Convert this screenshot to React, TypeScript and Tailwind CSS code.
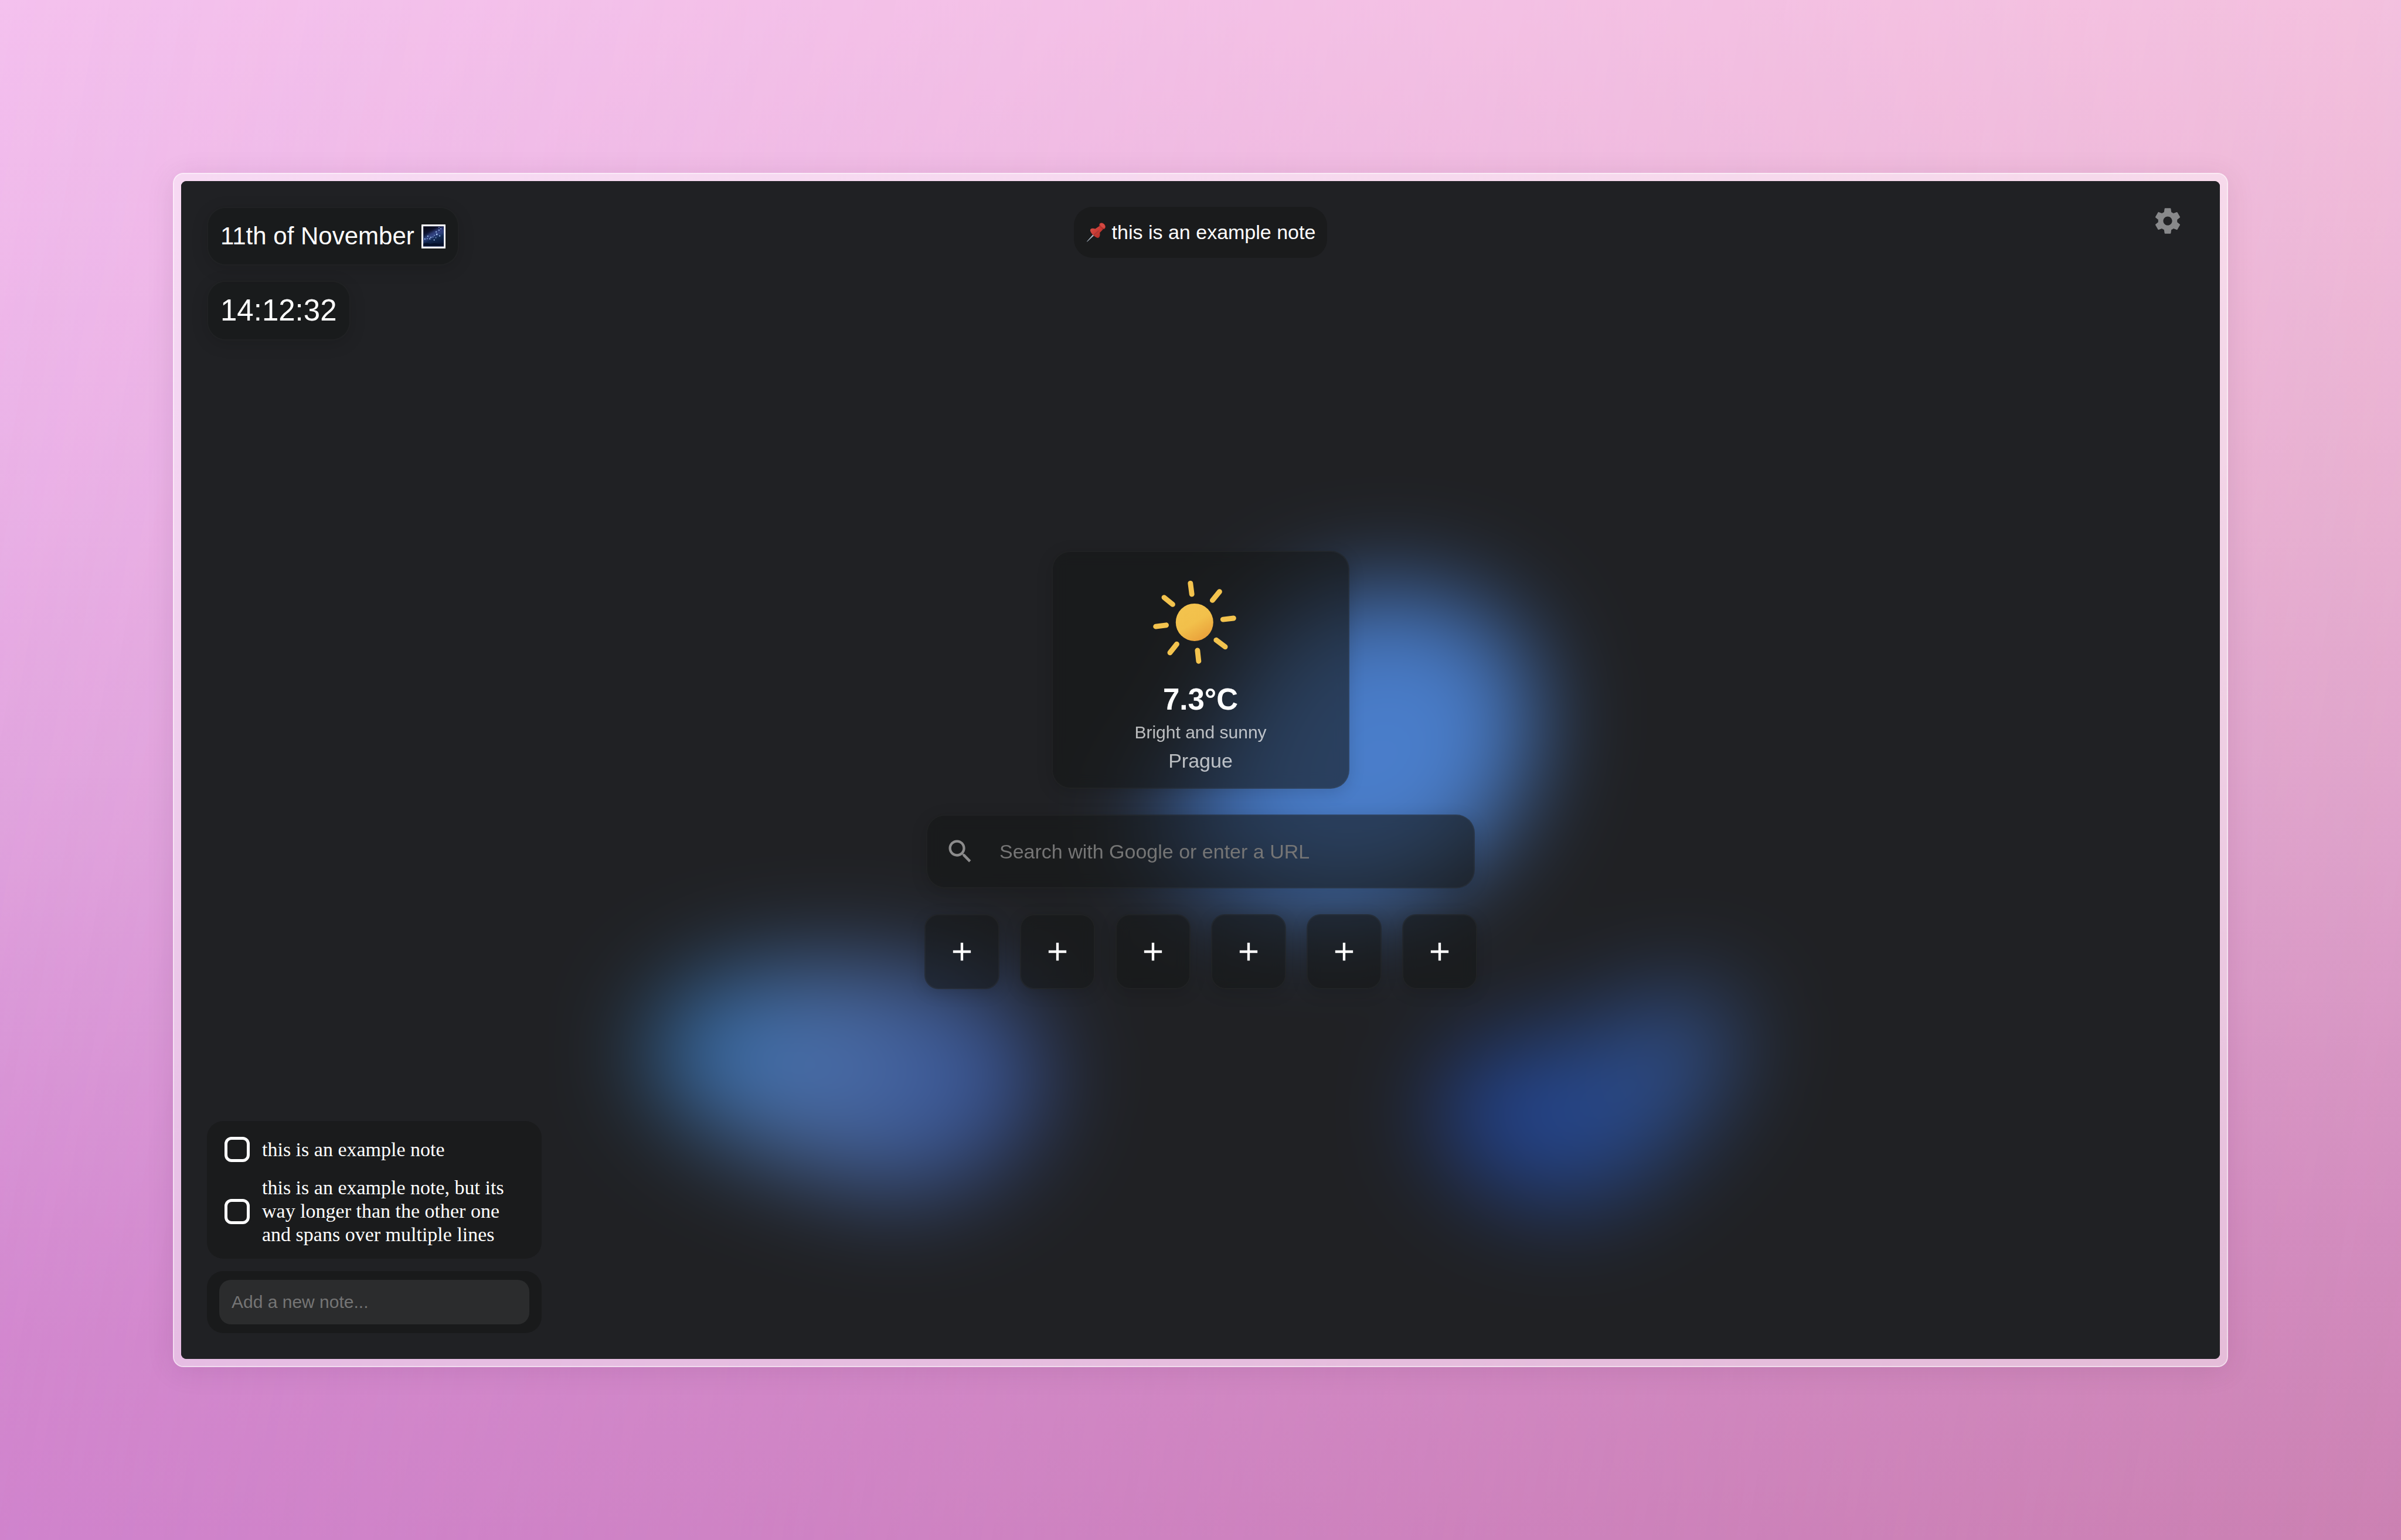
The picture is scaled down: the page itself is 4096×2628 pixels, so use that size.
import { useState } from "react";

const ARIAL = "font-['Liberation_Sans',Arial,sans-serif]";
const GLASS =
  "border-2 border-white/[0.03] bg-[#161717]/60 shadow-[0_6px_28px_rgba(0,0,0,0.14)]";

function MilkyWay() {
  const stars: [number, number, number][] = [
    [155, 56, 3], [167, 64, 3], [155, 73, 4], [137, 84, 4], [141, 100, 5], [160, 110, 4],
    [125, 106, 3], [83, 112, 4], [103, 119, 4], [64, 130, 4], [79, 128, 3], [96, 129, 4],
    [124, 136, 4], [135, 122, 3], [116, 117, 3],
  ];
  return (
    <svg className="size-[41px] shrink-0" viewBox="42 36 155 155" aria-label="Milky way" role="img">
      <defs>
        <linearGradient id="night" x1="0" y1="0" x2="0.3" y2="1">
          <stop offset="0" stopColor="#05060f" />
          <stop offset="0.35" stopColor="#0e1330" />
          <stop offset="0.6" stopColor="#16305a" />
          <stop offset="1" stopColor="#0a1838" />
        </linearGradient>
        <filter id="haze" x="-50%" y="-50%" width="200%" height="200%" colorInterpolationFilters="sRGB">
          <feGaussianBlur stdDeviation="9" />
        </filter>
        <clipPath id="sky">
          <rect x="54" y="48" width="132" height="129" />
        </clipPath>
      </defs>
      <rect x="42" y="36" width="155" height="155" rx="2" fill="#fdfdff" />
      <rect x="52" y="47" width="135" height="134" fill="#8f97b8" />
      <g clipPath="url(#sky)">
        <rect x="54" y="48" width="132" height="129" fill="url(#night)" />
        <path d="M48 134 L92 96 L150 60 L190 44 L190 92 L140 112 L48 150Z" fill="#3f4f98" opacity="0.7" filter="url(#haze)" />
        <path d="M54 160 l22 -5 24 6 26 -5 28 5 32 -4 v24 h-132z" fill="#04102a" />
        {stars.map(([x, y, r]) => (
          <circle key={`${x}-${y}`} cx={x} cy={y} r={r} fill="#a9c8f4" />
        ))}
      </g>
    </svg>
  );
}

function Pushpin() {
  return (
    <svg className="size-[35px] shrink-0" viewBox="30 30 132 130" aria-label="Pinned" role="img">
      <defs>
        <linearGradient id="pinRed" x1="0" y1="0" x2="1" y2="1">
          <stop offset="0" stopColor="#d8544c" />
          <stop offset="0.5" stopColor="#cb3a33" />
          <stop offset="1" stopColor="#a02a25" />
        </linearGradient>
      </defs>
      <path d="M36 156 L84 101 L92 108 L42 154Z" fill="#8d99a6" />
      <path d="M36 156 L86 103 L89 106Z" fill="#c5d0da" />
      <path d="M60 84 C58 72 72 66 92 72 L119 54 L142 76 L121 98 C126 116 118 132 108 131 C94 128 62 104 60 84Z" fill="url(#pinRed)" />
      <path d="M118 44 C121 31 138 30 149 41 C161 52 160 70 148 74 C134 77 115 59 118 44Z" fill="#b8322d" />
      <path d="M122 42 C127 34 139 35 148 43 C156 51 158 61 153 67 C144 69 124 56 122 42Z" fill="#d34a43" />
      <path d="M78 112 L112 82 L117 86 L86 116Z" fill="#8e3a3c" opacity="0.6" />
    </svg>
  );
}

function Sun() {
  return (
    <svg className="h-[161px] w-[177px]" viewBox="4 0 220 200" aria-hidden="true">
      <defs>
        <linearGradient id="sunFill" x1="0.25" y1="0.07" x2="0.75" y2="0.93">
          <stop offset="0" stopColor="#f3c34e" />
          <stop offset="0.5" stopColor="#f2c04b" />
          <stop offset="1" stopColor="#eaa23b" />
        </linearGradient>
      </defs>
      <circle cx="100.7" cy="99.3" r="39.8" fill="url(#sunFill)" />
      <path
        d="M92 16.5L95 39.7M153.7 34.3L138.7 52.7M183.5 90.7L161 93.3M146.7 137L165.7 151.3M107 159L109.5 181.7M63 145.7L48.7 163.7M40.7 105.3L18.5 108.2M36.3 46.7L54.3 61.3"
        stroke="#f3c34e"
        strokeWidth="11"
        strokeLinecap="round"
        fill="none"
      />
    </svg>
  );
}

function Aurora() {
  return (
    <svg
      className="pointer-events-none absolute inset-0 size-full"
      viewBox="118.3 118.3 1331.4 769.1"
      preserveAspectRatio="xMidYMid slice"
      aria-hidden="true"
    >
      <defs>
        <filter
          id="soft"
          filterUnits="userSpaceOnUse"
          x="-20"
          y="-20"
          width="1610"
          height="1050"
          colorInterpolationFilters="sRGB"
        >
          <feGaussianBlur stdDeviation="32" />
        </filter>
        <radialGradient id="top" gradientUnits="userSpaceOnUse" cx="905" cy="500" r="140">
          <stop offset="0" stopColor="#4b80cf" />
          <stop offset="0.6" stopColor="#487ac4" />
          <stop offset="1" stopColor="#345892" />
        </radialGradient>
        <linearGradient id="left" gradientUnits="userSpaceOnUse" x1="430" y1="670" x2="670" y2="740">
          <stop offset="0" stopColor="#2e6ca6" />
          <stop offset="0.4" stopColor="#4b6ea8" />
          <stop offset="1" stopColor="#344c8a" />
        </linearGradient>
        <linearGradient id="right" gradientUnits="userSpaceOnUse" x1="960" y1="740" x2="1130" y2="660">
          <stop offset="0" stopColor="#213f88" />
          <stop offset="0.4" stopColor="#26478a" />
          <stop offset="1" stopColor="#355080" />
        </linearGradient>
      </defs>
      <g filter="url(#soft)">
        <rect x="-20" y="-20" width="1610" height="1050" fill="#202124" />
        <path d="M905 382C965 380 1006 415 1004 465C1000 528 970 568 900 590C840 600 770 584 750 548C740 520 785 500 800 470C822 408 850 384 905 382Z" fill="url(#top)" />
        <path d="M424 690C424 648 480 628 540 630C625 626 684 656 684 702C680 752 630 784 580 780C530 765 436 742 424 690Z" fill="url(#left)" />
        <path d="M936 726C938 690 980 676 1020 676C1060 660 1100 634 1128 654C1152 690 1105 744 1075 766C1040 804 950 790 936 726Z" fill="url(#right)" />
      </g>
    </svg>
  );
}

function Gear() {
  return (
    <svg className="size-[52px] shrink-0" viewBox="0 0 24 24" fill="#88898b" aria-hidden="true">
      <path d="M19.43 12.98c.04-.32.07-.64.07-.98s-.03-.66-.07-.98l2.11-1.65c.19-.15.24-.42.12-.64l-2-3.46c-.12-.22-.39-.3-.61-.22l-2.49 1c-.52-.4-1.08-.73-1.69-.98l-.38-2.65C14.46 2.18 14.25 2 14 2h-4c-.25 0-.46.18-.49.42l-.38 2.65c-.61.25-1.17.59-1.69.98l-2.49-1c-.23-.09-.49 0-.61.22l-2 3.46c-.13.22-.07.49.12.64l2.11 1.65c-.04.32-.07.65-.07.98s.03.66.07.98l-2.11 1.65c-.19.15-.24.42-.12.64l2 3.46c.12.22.39.3.61.22l2.49-1c.52.4 1.08.73 1.69.98l.38 2.65c.03.24.24.42.49.42h4c.25 0 .46-.18.49-.42l.38-2.65c.61-.25 1.17-.59 1.69-.98l2.49 1c.23.09.49 0 .61-.22l2-3.46c.12-.22.07-.49-.12-.64l-2.11-1.65zM12 15.5c-1.93 0-3.5-1.57-3.5-3.5s1.57-3.5 3.5-3.5 3.5 1.57 3.5 3.5-1.57 3.5-3.5 3.5z" />
    </svg>
  );
}

const NOTES = [
  "this is an example note",
  "this is an example note, but its way longer than the other one and spans over multiple lines",
];

function Notes() {
  const [done, setDone] = useState<boolean[]>(NOTES.map(() => false));
  return (
    <section className="flex w-[571px] flex-col gap-[21px]">
      <ul className="flex flex-col gap-[18px] rounded-[28px] bg-[#1a1b1c] px-5 py-[21px]">
        {NOTES.map((note, i) => (
          <li key={note}>
            <label className="flex items-center gap-[21px] pl-[10px]">
              <input
                type="checkbox"
                checked={done[i]}
                onChange={() => setDone(done.map((d, j) => (j === i ? !d : d)))}
                className="my-[6px] size-[43px] shrink-0 appearance-none rounded-[12px] border-[5px] border-white checked:bg-white"
              />
              <span className="font-['Liberation_Serif',serif] text-[34px] leading-[40px] text-white">
                {note}
              </span>
            </label>
          </li>
        ))}
      </ul>
      <div className="rounded-[28px] bg-[#191a1b] px-[21px] py-[15px]">
        <input
          type="text"
          aria-label="Add a new note"
          placeholder="Add a new note..."
          className="block h-[76px] w-full rounded-[20px] bg-[#2b2c2d] px-[21px] text-[30px] text-white outline-none placeholder:text-[#757575]"
        />
      </div>
    </section>
  );
}

function Weather() {
  return (
    <section className={`flex w-[508px] flex-col items-center gap-[10px] rounded-[32px] pt-10 pb-[26px] backdrop-blur-md ${GLASS}`}>
      <Sun />
      <p className="mt-[13px] text-[51px] leading-[56px] font-bold text-white">7.3°C</p>
      <p className="text-[30px] leading-[36px] text-white/70">Bright and sunny</p>
      <p className="text-[34px] leading-[40px] text-white/70">Prague</p>
    </section>
  );
}

function Search() {
  return (
    <form
      role="search"
      onSubmit={(e) => e.preventDefault()}
      className={`flex h-[126px] w-[936px] items-center gap-[41px] rounded-[32px] px-[30px] backdrop-blur-md ${GLASS}`}
    >
      <svg className="size-[52px] shrink-0" viewBox="0 0 24 24" fill="#8c8c8c" aria-hidden="true">
        <path d="M15.5 14h-.79l-.28-.27C15.41 12.59 16 11.11 16 9.5 16 5.91 13.09 3 9.5 3S3 5.91 3 9.5 5.91 16 9.5 16c1.61 0 3.09-.59 4.23-1.57l.27.28v.79l5 4.99L20.49 19l-4.99-5zm-6 0C7.01 14 5 11.99 5 9.5S7.01 5 9.5 5 14 7.01 14 9.5 11.99 14 9.5 14z" />
      </svg>
      <input
        type="text"
        aria-label="Search"
        placeholder="Search with Google or enter a URL"
        className="h-full min-w-0 flex-1 bg-transparent text-[34px] text-white outline-none placeholder:text-[#757575]"
      />
    </form>
  );
}

function Shortcuts() {
  return (
    <div className="flex gap-[35px]">
      {[1, 2, 3, 4, 5, 6].map((n) => (
        <button
          key={n}
          type="button"
          aria-label={`Add shortcut ${n}`}
          className={`flex size-32 items-center justify-center rounded-3xl backdrop-blur-md ${GLASS}`}
        >
          <svg className="size-[52px]" viewBox="0 0 24 24" fill="#ffffff" aria-hidden="true">
            <path d="M19 13h-6v6h-2v-6H5v-2h6V5h2v6h6v2z" />
          </svg>
        </button>
      ))}
    </div>
  );
}

export default function App() {
  return (
    <div
      className={`relative isolate flex min-h-screen bg-[linear-gradient(to_bottom,#f4c1ee_0%,#ebb2e8_30%,#e2a5e0_50%,#d995d8_70%,#d388d1_87%,#d184d0_100%)] p-[295px] ${ARIAL}`}
    >
      <div className="absolute inset-0 -z-10 bg-[linear-gradient(to_bottom,#f3c0dc_0%,#e8b1cf_30%,#dda1c8_55%,#d28cbd_80%,#cb81b2_100%)] [mask-image:linear-gradient(100deg,transparent,black)]" />
      <div className="flex flex-1 rounded-[18px] border-2 border-white/70 bg-white/45 bg-clip-padding p-3 shadow-[0_6px_48px_rgba(60,0,60,0.1)]">
        <main className="relative isolate flex-1 overflow-hidden rounded-[9px] bg-[#202124]">
          <Aurora />
          <div className="relative grid h-full grid-rows-[1fr_auto_1fr] p-11">
            <header className="grid grid-cols-[1fr_auto_1fr] items-start">
              <div className="flex flex-col items-start gap-[26px]">
                <div className={`flex items-center gap-3 rounded-[32px] px-[21px] py-[18px] ${GLASS}`}>
                  <span className="text-[42px] leading-[60px] whitespace-nowrap text-white">
                    11th of November
                  </span>
                  <MilkyWay />
                </div>
                <time className={`rounded-[32px] px-[21px] py-[18px] text-[51px] leading-[62px] text-white ${GLASS}`}>
                  14:12:32
                </time>
              </div>
              <div className="flex items-center gap-[10px] rounded-[32px] bg-[#1a1b1c] px-5 py-[23px]">
                <Pushpin />
                <span className="text-[34px] leading-[41px] whitespace-nowrap text-white">
                  this is an example note
                </span>
              </div>
              <button
                type="button"
                aria-label="Settings"
                className="mr-[19px] flex h-12 items-center justify-self-end"
              >
                <Gear />
              </button>
            </header>
            <div className="flex flex-col items-center gap-11">
              <Weather />
              <Search />
              <Shortcuts />
            </div>
            <footer className="self-end">
              <Notes />
            </footer>
          </div>
        </main>
      </div>
    </div>
  );
}
